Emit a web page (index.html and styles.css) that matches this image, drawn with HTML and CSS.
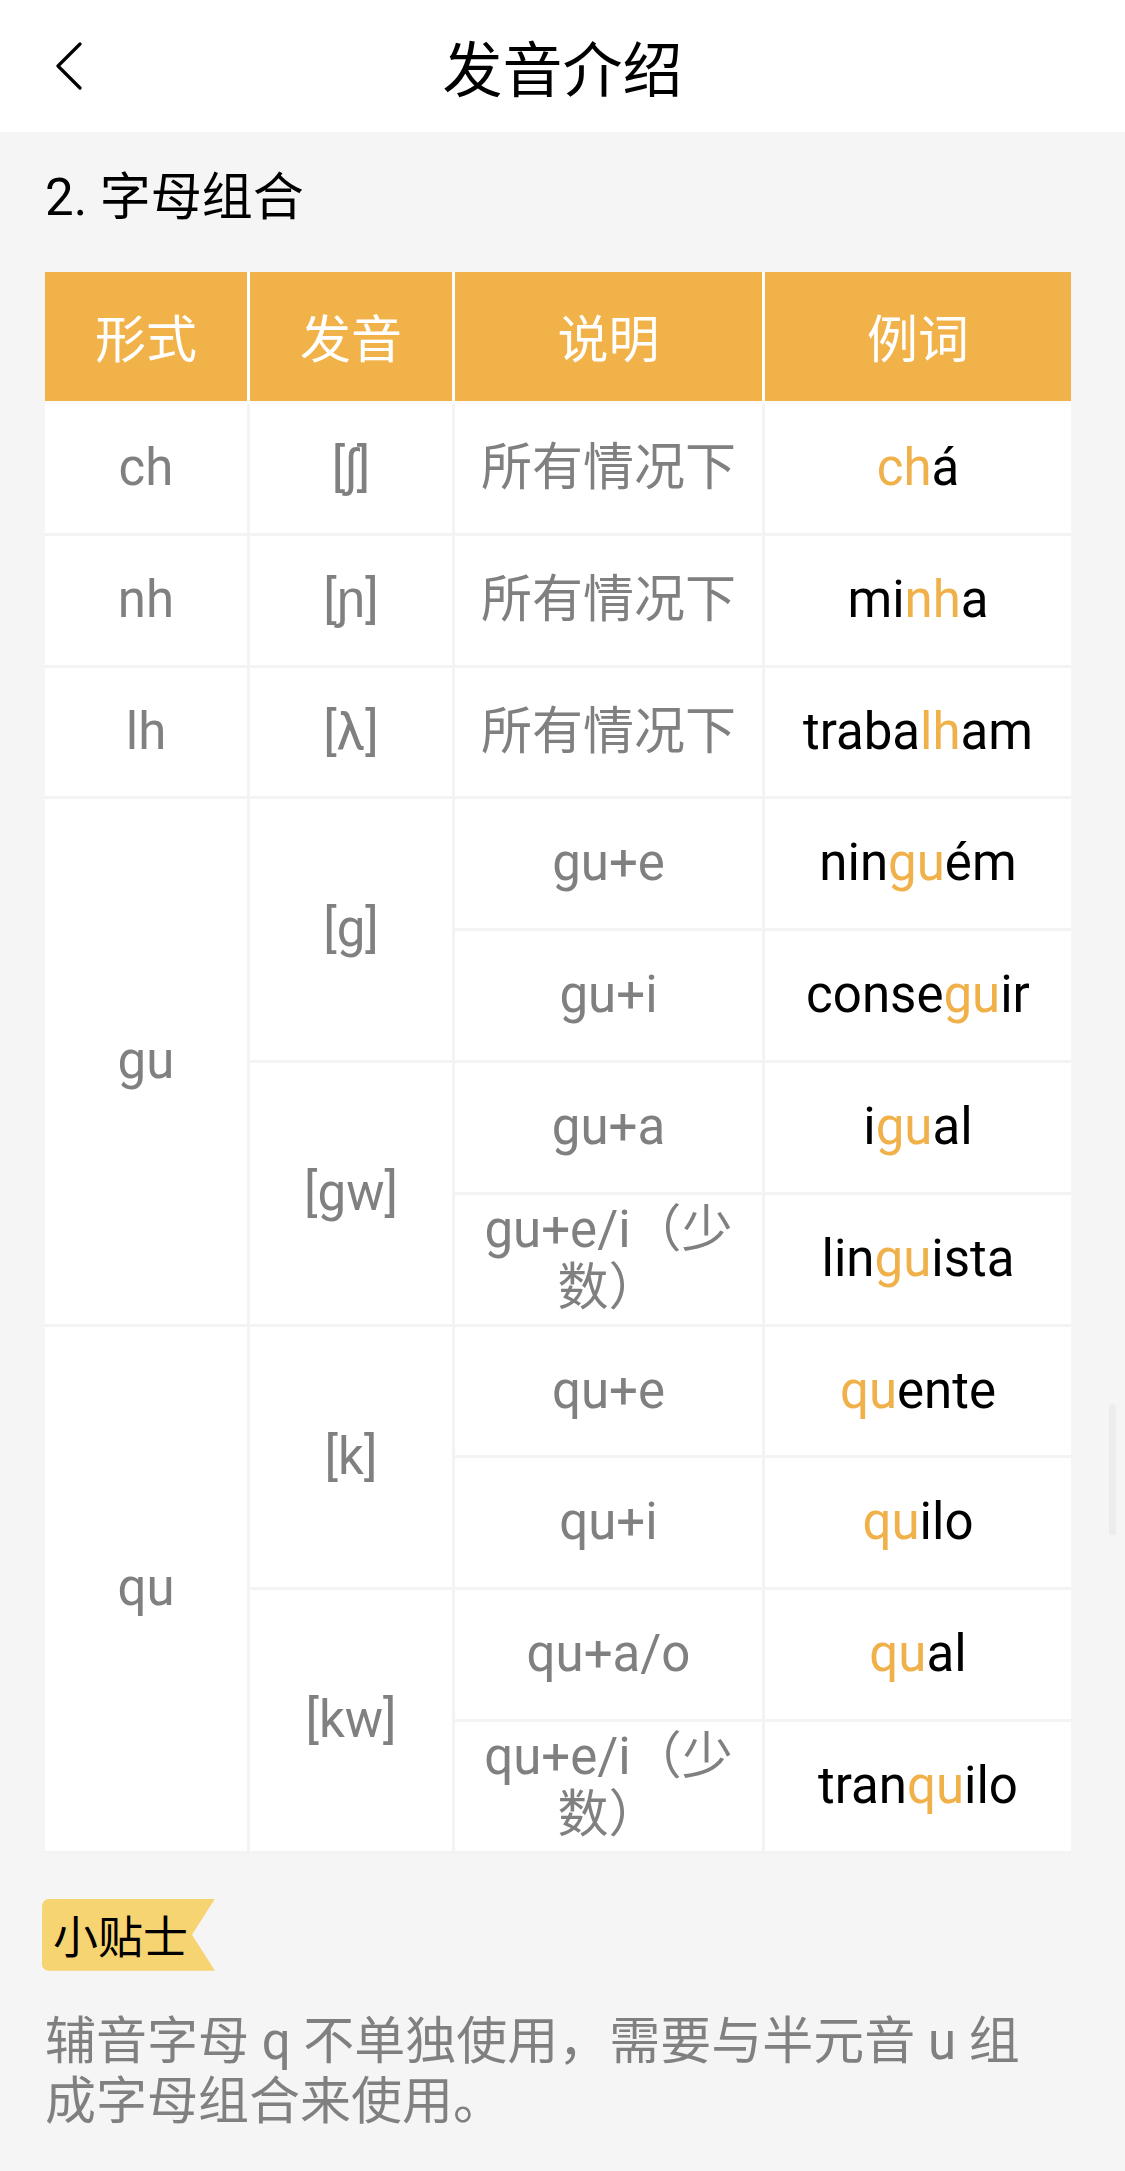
FILE: index.html
```html
<!DOCTYPE html>
<html lang="zh-CN">
<head>
<meta charset="utf-8">
<title>发音介绍</title>
<link rel="stylesheet" href="styles.css">
</head>
<body>
<header class="navbar">
  <div class="nav-left">
    <svg class="back" width="28" height="48" viewBox="0 0 28 48" aria-hidden="true">
      <path d="M25 2 L3 24 L25 46" fill="none" stroke="#000" stroke-width="3.2" stroke-linecap="round" stroke-linejoin="round"/>
    </svg>
  </div>
  <h1 class="nav-title">发音介绍</h1>
  <div class="nav-right"></div>
</header>

<main class="content">
  <h2 class="section-title">2. 字母组合</h2>

  <div class="tbl">
    <div class="th">形式</div>
    <div class="th">发音</div>
    <div class="th">说明</div>
    <div class="th last">例词</div>

    <div class="td">ch</div>
    <div class="td">[ʃ]</div>
    <div class="td">所有情况下</div>
    <div class="td ex last"><span class="hl">ch</span>á</div>

    <div class="td">nh</div>
    <div class="td">[ɲ]</div>
    <div class="td">所有情况下</div>
    <div class="td ex last">mi<span class="hl">nh</span>a</div>

    <div class="td">lh</div>
    <div class="td">[λ]</div>
    <div class="td">所有情况下</div>
    <div class="td ex last">traba<span class="hl">lh</span>am</div>

    <div class="td span4">gu</div>
    <div class="td span2">[g]</div>
    <div class="td">gu+e</div>
    <div class="td ex last">nin<span class="hl">gu</span>ém</div>
    <div class="td">gu+i</div>
    <div class="td ex last">conse<span class="hl">gu</span>ir</div>
    <div class="td span2">[gw]</div>
    <div class="td">gu+a</div>
    <div class="td ex last">i<span class="hl">gu</span>al</div>
    <div class="td">gu+e/i（少数）</div>
    <div class="td ex last">lin<span class="hl">gu</span>ista</div>

    <div class="td span4">qu</div>
    <div class="td span2">[k]</div>
    <div class="td">qu+e</div>
    <div class="td ex last"><span class="hl">qu</span>ente</div>
    <div class="td">qu+i</div>
    <div class="td ex last"><span class="hl">qu</span>ilo</div>
    <div class="td span2">[kw]</div>
    <div class="td">qu+a/o</div>
    <div class="td ex last"><span class="hl">qu</span>al</div>
    <div class="td">qu+e/i（少数）</div>
    <div class="td ex last">tran<span class="hl">qu</span>ilo</div>
  </div>

  <div class="tip-badge">小贴士</div>
  <p class="tip-text">辅音字母 q 不单独使用，需要与半元音 u 组成字母组合来使用。</p>
</main>

<div class="scroll-indicator"></div>
</body>
</html>
```

FILE: styles.css
```css
html, body {
  margin: 0;
  padding: 0;
}

body {
  background: #f5f5f5;
  font-family: "Roboto", "Noto Sans CJK SC", sans-serif;
  color: #000;
  width: 1125px;
  min-height: 2171px;
  position: relative;
}

.navbar {
  height: 132px;
  background: #fff;
  display: grid;
  grid-template-columns: 1fr auto 1fr;
  align-items: center;
}

.nav-left {
  padding-left: 55px;
  display: flex;
  align-items: center;
}

.back {
  display: block;
}

.nav-title {
  margin: 0;
  font-family: "Noto Sans CJK SC", sans-serif;
  font-size: 60px;
  font-weight: 400;
  line-height: 1;
}

.content {
  padding: 36px 0 0 45px;
}

.section-title {
  margin: 0 0 44px 0;
  font-size: 51px;
  font-weight: 400;
  line-height: 60px;
  color: #000;
}

.tbl {
  display: grid;
  width: 1026px;
  grid-template-columns: 205px 205px 310px 306px;
  grid-template-rows: 132px repeat(11, 131.8px);
  font-size: 51px;
  line-height: 1.15;
}

.th,
.td {
  box-sizing: border-box;
  display: flex;
  align-items: center;
  justify-content: center;
  text-align: center;
  padding: 0 20px;
}

.th {
  background: #f2b24a;
  color: #fff;
  border-right: 3px solid #fff;
  border-bottom: 3px solid #fbfbfb;
  font-family: "Noto Sans CJK SC", sans-serif;
}

.td {
  background: #fff;
  color: #808080;
  border-right: 3px solid #f3f3f3;
  border-bottom: 3px solid #f3f3f3;
}

.th.last,
.td.last {
  border-right: 0;
}

.td.ex {
  color: #000;
}

.hl {
  color: #f0b04a;
}

.span2 {
  grid-row: span 2;
}

.span4 {
  grid-row: span 4;
}

.tip-badge {
  margin-top: 45px;
  margin-left: -3px;
  width: 173px;
  height: 72px;
  box-sizing: border-box;
  padding-left: 11px;
  background: #f7d472;
  border-radius: 7px 0 0 7px;
  clip-path: polygon(0 0, 100% 0, 86.7% 50%, 100% 100%, 0 100%);
  display: flex;
  align-items: center;
  font-family: "Noto Sans CJK SC", sans-serif;
  font-size: 45px;
  line-height: 1;
  color: #000;
}

.tip-text {
  margin: 41px 0 0 0;
  width: 1025px;
  font-size: 51px;
  line-height: 60px;
  color: #808080;
}

.scroll-indicator {
  position: absolute;
  left: 1109px;
  top: 1404px;
  width: 7px;
  height: 131px;
  border-radius: 4px;
  background: #ececec;
}
```
